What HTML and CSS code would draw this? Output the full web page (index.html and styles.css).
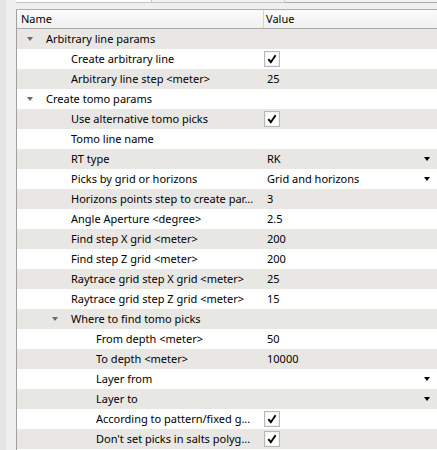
FILE: index.html
```html
<!DOCTYPE html>
<html>
<head>
<meta charset="utf-8">
<link rel="stylesheet" href="styles.css">
</head>
<body>
<div class="page">
  <div class="strip"></div>
  <div class="gutter"></div>
  <div class="content">
    <div class="topbar">
      <div class="seg seg1"></div>
      <div class="seg seg2"></div>
      <div class="seg seg3"></div>
    </div>
    <div class="tree">
      <div class="header">
        <div class="hcell hname">Name</div>
        <div class="hcell hvalue">Value</div>
      </div>

      <div class="row alt"><div class="name d0"><span class="arrow open"></span><span class="label">Arbitrary line params</span></div><div class="value"></div></div>
      <div class="row"><div class="name d1"><span class="arrow"></span><span class="label">Create arbitrary line</span></div><div class="value"><span class="check"><svg width="10" height="10" viewBox="0 0 10 10"><path d="M1.3 5.2 L3.8 8.2 L8.6 1.2" fill="none" stroke="#000" stroke-width="1.9"/></svg></span></div></div>
      <div class="row alt"><div class="name d1"><span class="arrow"></span><span class="label">Arbitrary line step &lt;meter&gt;</span></div><div class="value"><span class="text">25</span></div></div>
      <div class="row"><div class="name d0"><span class="arrow open"></span><span class="label">Create tomo params</span></div><div class="value"></div></div>
      <div class="row alt"><div class="name d1"><span class="arrow"></span><span class="label">Use alternative tomo picks</span></div><div class="value"><span class="check"><svg width="10" height="10" viewBox="0 0 10 10"><path d="M1.3 5.2 L3.8 8.2 L8.6 1.2" fill="none" stroke="#000" stroke-width="1.9"/></svg></span></div></div>
      <div class="row"><div class="name d1"><span class="arrow"></span><span class="label">Tomo line name</span></div><div class="value"></div></div>
      <div class="row alt"><div class="name d1"><span class="arrow"></span><span class="label">RT type</span></div><div class="value combo"><span class="text">RK</span><span class="drop"></span></div></div>
      <div class="row"><div class="name d1"><span class="arrow"></span><span class="label">Picks by grid or horizons</span></div><div class="value combo"><span class="text">Grid and horizons</span><span class="drop"></span></div></div>
      <div class="row alt"><div class="name d1"><span class="arrow"></span><span class="label">Horizons points step to create par...</span></div><div class="value"><span class="text">3</span></div></div>
      <div class="row"><div class="name d1"><span class="arrow"></span><span class="label">Angle Aperture &lt;degree&gt;</span></div><div class="value"><span class="text">2.5</span></div></div>
      <div class="row alt"><div class="name d1"><span class="arrow"></span><span class="label">Find step X grid &lt;meter&gt;</span></div><div class="value"><span class="text">200</span></div></div>
      <div class="row"><div class="name d1"><span class="arrow"></span><span class="label">Find step Z grid &lt;meter&gt;</span></div><div class="value"><span class="text">200</span></div></div>
      <div class="row alt"><div class="name d1"><span class="arrow"></span><span class="label">Raytrace grid step X grid &lt;meter&gt;</span></div><div class="value"><span class="text">25</span></div></div>
      <div class="row"><div class="name d1"><span class="arrow"></span><span class="label">Raytrace grid step Z grid &lt;meter&gt;</span></div><div class="value"><span class="text">15</span></div></div>
      <div class="row alt"><div class="name d1"><span class="arrow open"></span><span class="label">Where to find tomo picks</span></div><div class="value"></div></div>
      <div class="row"><div class="name d2"><span class="arrow"></span><span class="label">From depth &lt;meter&gt;</span></div><div class="value"><span class="text">50</span></div></div>
      <div class="row alt"><div class="name d2"><span class="arrow"></span><span class="label">To depth &lt;meter&gt;</span></div><div class="value"><span class="text">10000</span></div></div>
      <div class="row"><div class="name d2"><span class="arrow"></span><span class="label">Layer from</span></div><div class="value combo"><span class="text"></span><span class="drop"></span></div></div>
      <div class="row alt"><div class="name d2"><span class="arrow"></span><span class="label">Layer to</span></div><div class="value combo"><span class="text"></span><span class="drop"></span></div></div>
      <div class="row"><div class="name d2"><span class="arrow"></span><span class="label">According to pattern/fixed g...</span></div><div class="value"><span class="check"><svg width="10" height="10" viewBox="0 0 10 10"><path d="M1.3 5.2 L3.8 8.2 L8.6 1.2" fill="none" stroke="#000" stroke-width="1.9"/></svg></span></div></div>
      <div class="row alt"><div class="name d2"><span class="arrow"></span><span class="label">Don't set picks in salts polyg...</span></div><div class="value"><span class="check"><svg width="10" height="10" viewBox="0 0 10 10"><path d="M1.3 5.2 L3.8 8.2 L8.6 1.2" fill="none" stroke="#000" stroke-width="1.9"/></svg></span></div></div>
    </div>
  </div>
</div>
</body>
</html>
```
FILE: styles.css
```css
html, body {
  margin: 0;
  padding: 0;
  background: #efefef;
  overflow: hidden;
}
body {
  font-family: "Noto Sans", "Open Sans", sans-serif;
  font-size: 11px;
  color: #000;
}
.page {
  display: flex;
  width: 437px;
  height: 450px;
}
.strip {
  width: 6px;
  background: #e5e5e5;
  flex: none;
}
.gutter {
  width: 10px;
  flex: none;
  background: #efefef;
}
.content {
  flex: 1;
  display: flex;
  flex-direction: column;
  min-width: 0;
}
.topbar {
  display: flex;
  height: 3px;
  margin-bottom: 6px;
}
.seg {
  height: 2px;
  border-bottom: 1px solid #c4c4c4;
}
.seg1 {
  width: 135px;
  background: #fbfbfb;
  border-right: 1px solid #c4c4c4;
}
.seg2 {
  width: 132px;
  background: #f3f3f3;
  border-right: 1px solid #c4c4c4;
}
.seg3 {
  flex: 1;
  background: #f2f2f2;
  border-bottom-color: #ababab;
}
.tree {
  flex: 1;
  border-left: 1px solid #a0a0a0;
  border-top: 1px solid #b0b0b0;
  background: #fff;
}
.header {
  display: grid;
  grid-template-columns: 246px 1fr;
  height: 18px;
  background: linear-gradient(#fbfbfb, #f1f1f1);
  border-bottom: 1px solid #acacac;
}
.hcell {
  line-height: 18px;
  padding-left: 4px;
}
.hvalue {
  border-left: 1px solid #d5d5d5;
  padding-left: 2px;
}
.row {
  display: grid;
  grid-template-columns: 246px 1fr;
  height: 20px;
  line-height: 20px;
  background: #fff;
}
.row.alt {
  background: #e9e7e4;
}
.name {
  display: flex;
  align-items: center;
  white-space: nowrap;
  overflow: hidden;
}
.d0 { padding-left: 10px; }
.d1 { padding-left: 35px; }
.d2 { padding-left: 60px; }
.arrow {
  width: 19px;
  height: 20px;
  flex: none;
  position: relative;
}
.arrow.open::before {
  content: "";
  position: absolute;
  left: 0;
  top: 8px;
  border-left: 3.5px solid transparent;
  border-right: 3.5px solid transparent;
  border-top: 4px solid #6b6b6b;
}
.value {
  display: flex;
  align-items: center;
  padding-left: 4px;
  padding-right: 7px;
  white-space: nowrap;
}
.combo {
  justify-content: space-between;
}
.drop {
  width: 0;
  height: 0;
  border-left: 3.5px solid transparent;
  border-right: 3.5px solid transparent;
  border-top: 4px solid #000;
}
.check {
  margin-left: -3px;
  width: 14px;
  height: 14px;
  border: 1px solid #b8b8b8;
  box-shadow: inset 0 0 0 1px #f4f4f4;
  background: #fff;
  display: flex;
  align-items: center;
  justify-content: center;
}
```
